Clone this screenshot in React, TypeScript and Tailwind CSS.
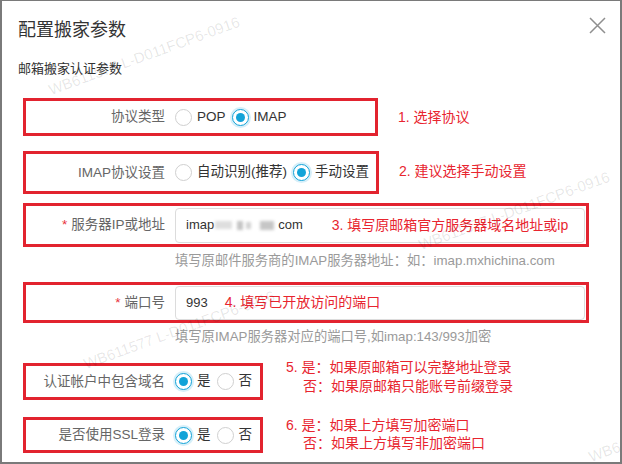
import React from "react";

const Radio = ({ checked }: { checked?: boolean }) =>
  checked ? (
    <span className="w-[17px] h-[17px] shrink-0 rounded-full border border-[#12a3d8] bg-white flex items-center justify-center shadow-[0_0_0_2px_#d6eff9]">
      <span className="w-[9px] h-[9px] rounded-full bg-[#12a3d8]" />
    </span>
  ) : (
    <span className="w-[17px] h-[17px] shrink-0 rounded-full border border-[#d0d0d0] bg-white" />
  );

const Opt = ({ checked, label, first }: { checked?: boolean; label: string; first?: boolean }) => (
  <div className={first ? "flex items-center" : "flex items-center ml-[6px]"}>
    <Radio checked={checked} />
    <span className="ml-[5px] text-[13.5px] text-[#333]">{label}</span>
  </div>
);

const Label = ({ text, star }: { text: string; star?: boolean }) => (
  <span className="w-[139px] shrink-0 text-right text-[13.5px] text-[#666] leading-[20px]">
    {star && <span className="text-[#e8323c] mr-[4px]">*</span>}
    {text}
  </span>
);

const Mark = ({ className }: { className: string }) => (
  <span
    className={
      "absolute pointer-events-none whitespace-nowrap text-[15px] leading-[16px] text-black/10 origin-bottom-left -rotate-[20deg] " +
      className
    }
  >
    WB611577 L-D011FCP6-0916
  </span>
);

export default function App() {
  return (
    <div className="w-[622px] h-[464px] relative overflow-hidden bg-white border-t border-l-2 border-r-2 border-b-2 border-[#7a7a7a] font-['Liberation_Sans','Noto_Sans_CJK_SC',sans-serif]">
      <div className="flex justify-between pl-[16px] pr-[14px]">
        <h1 className="pt-[17px] text-[18px] leading-[24px] text-[#333] font-normal">配置搬家参数</h1>
        <svg className="mt-[16px]" width="17" height="17" viewBox="0 0 17 17">
          <path d="M1 1 L16 16 M16 1 L1 16" stroke="#8f8f8f" strokeWidth="1.5" fill="none" />
        </svg>
      </div>
      <div className="pl-[16px] flex flex-col">
        <div className="mt-[17px] text-[13px] leading-[20px] text-[#333]">邮箱搬家认证参数</div>

        {/* row 1 */}
        <div className="mt-[19px] flex items-center">
          <div className="ml-[5px] w-[355px] h-[38px] border-[3px] border-[#e2232f] flex items-center">
            <Label text="协议类型" />
            <div className="ml-[10px] flex items-center">
              <Opt first label="POP" />
              <Opt checked label="IMAP" />
            </div>
          </div>
          <span className="ml-[20px] text-[14px] text-[#e8252f]">1. 选择协议</span>
        </div>

        {/* row 2 */}
        <div className="mt-[15px] flex items-center">
          <div className="ml-[5px] w-[356px] h-[43px] border-[3px] border-[#e2232f] flex items-center">
            <Label text="IMAP协议设置" />
            <div className="ml-[10px] flex items-center">
              <Opt first label="自动识别(推荐)" />
              <Opt checked label="手动设置" />
            </div>
          </div>
          <span className="ml-[20px] -mt-[3px] text-[14px] text-[#e8252f]">2. 建议选择手动设置</span>
        </div>

        {/* row 3 */}
        <div className="mt-[9px] ml-[5px] w-[566px] h-[44px] border-[3px] border-[#e2232f] flex items-center">
          <Label text="服务器IP或地址" star />
          <div className="ml-[10px] w-[410px] h-[35px] rounded-[4px] border border-[#dcdcdc] flex items-center pl-[10px]">
            <span className="text-[13px] text-[#333]">imap</span>
            <span className="flex items-center w-[64px] h-[14px]">
              <span className="ml-[1px] w-[17px] h-[8px] bg-[#dedede] blur-[1.5px]" />
              <span className="ml-[5px] w-[6px] h-[9px] bg-[#c4c4c4] blur-[1.5px]" />
              <span className="ml-[3px] w-[5px] h-[7px] bg-[#d2d2d2] blur-[1.5px]" />
              <span className="ml-[9px] w-[14px] h-[9px] bg-[#c6c6c6] blur-[1.5px]" />
            </span>
            <span className="text-[13px] text-[#333]">com</span>
            <span className="ml-[29px] text-[14px] text-[#e8252f]">3. 填写原邮箱官方服务器域名地址或ip</span>
          </div>
        </div>
        <div className="mt-[5px] ml-[157px] text-[13.3px] leading-[18px] text-[#9a9a9a]">
          填写原邮件服务商的IMAP服务器地址：如：imap.mxhichina.com
        </div>

        {/* row 4 */}
        <div className="mt-[12px] ml-[5px] w-[566px] h-[41px] border-[3px] border-[#e2232f] flex items-center">
          <Label text="端口号" star />
          <div className="ml-[10px] w-[410px] h-[34px] rounded-[4px] border border-[#dcdcdc] flex items-center pl-[10px]">
            <span className="text-[13px] text-[#333]">993</span>
            <span className="ml-[17px] text-[14px] text-[#e8252f]">4. 填写已开放访问的端口</span>
          </div>
        </div>
        <div className="mt-[5px] ml-[157px] text-[13.3px] leading-[18px] text-[#9a9a9a]">
          填写原IMAP服务器对应的端口号,如imap:143/993加密
        </div>

        {/* row 5 */}
        <div className="mt-[17px] flex items-center">
          <div className="ml-[5px] w-[240px] h-[37px] border-[3px] border-[#e2232f] flex items-center">
            <Label text="认证帐户中包含域名" />
            <div className="ml-[10px] flex items-center">
              <Opt first checked label="是" />
              <Opt label="否" />
            </div>
          </div>
          <div className="ml-[23px] -mt-[9px] text-[14px] leading-[19px] text-[#e8252f]">
            <div>5. 是：如果原邮箱可以完整地址登录</div>
            <div className="pl-[17px]">否：如果原邮箱只能账号前缀登录</div>
          </div>
        </div>

        {/* row 6 */}
        <div className="mt-[17px] flex items-center">
          <div className="ml-[5px] w-[240px] h-[36px] border-[3px] border-[#e2232f] flex items-center">
            <Label text="是否使用SSL登录" />
            <div className="ml-[10px] flex items-center">
              <Opt first checked label="是" />
              <Opt label="否" />
            </div>
          </div>
          <div className="ml-[23px] -mt-[2px] text-[14px] leading-[18px] text-[#e8252f]">
            <div>6. 是：如果上方填写加密端口</div>
            <div className="pl-[17px]">否：如果上方填写非加密端口</div>
          </div>
        </div>
      </div>

      <Mark className="left-[50px] top-[81px]" />
      <Mark className="left-[420px] top-[236px]" />
      <Mark className="left-[85px] top-[355px]" />
      <Mark className="left-[590px] top-[448px]" />
    </div>
  );
}
